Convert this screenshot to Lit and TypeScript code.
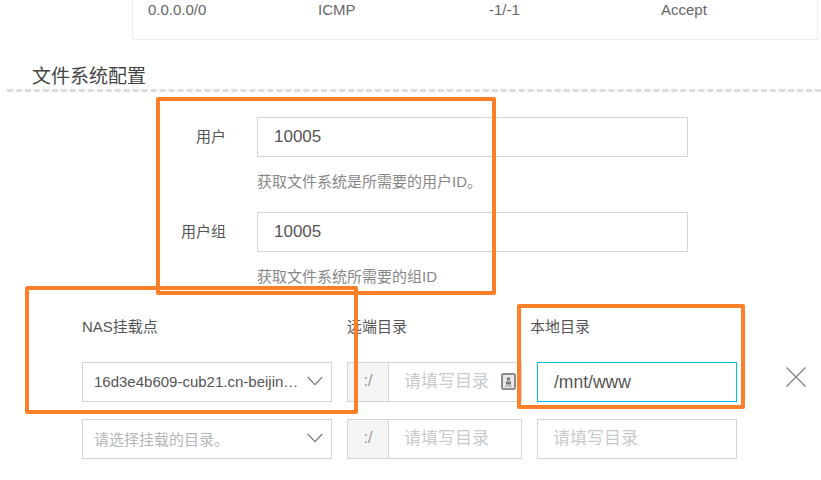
import { LitElement, html, css } from "lit";
import { customElement } from "lit/decorators.js";

const chevron = html`<svg class="chev" width="16" height="10" viewBox="0 0 16 10" fill="none" stroke="#777" stroke-width="1.1"><path d="M.7 1 8 8.6 15.3 1"/></svg>`;

@customElement("app-root")
export class AppRoot extends LitElement {
  static styles = css`
    :host {
      display: block;
      position: relative;
      width: 821px;
      height: 480px;
      overflow: hidden;
      background: #fff;
      font-family: "Liberation Sans", "Noto Sans CJK SC", sans-serif;
      font-size: 15px;
      color: #555;
    }
    * { box-sizing: border-box; }
    .table {
      display: grid;
      grid-template-columns: 170px 171px 172px 1fr;
      height: 40px;
      margin: 0 3px 0 132px;
      padding: 1px 0 0 15px;
      border: 1px solid #eee;
      border-top: none;
      line-height: 18px;
      color: #666;
    }
    .title {
      height: 52px;
      margin-left: 7px;
      padding: 26px 0 0 25px;
      border-bottom: 3px dashed #ddd;
      font-size: 19px;
      line-height: 22px;
      color: #444;
    }
    .rows { padding-top: 25px; }
    .row { display: flex; height: 95px; }
    .label {
      width: 226px;
      height: 40px;
      line-height: 40px;
      text-align: right;
      color: #555;
    }
    .field { width: 431px; margin-left: 31px; }
    .help {
      height: 55px;
      padding-top: 15px;
      line-height: 20px;
      color: #888;
    }
    input {
      display: block;
      width: 100%;
      height: 40px;
      padding: 0 16px;
      border: 1px solid #d5d5d5;
      border-radius: 0;
      outline: none;
      background: #fff;
      font: inherit;
      font-size: 17px;
      color: #555;
    }
    input:placeholder-shown { padding-left: 15px; }
    input::placeholder { color: #c8cacc; opacity: 1; }
    .cols {
      display: grid;
      grid-template-columns: 250px 175px 200px;
      column-gap: 15px;
      margin-left: 82px;
      color: #555;
    }
    .head {
      height: 55px;
      padding-top: 10px;
      line-height: 20px;
    }
    .head.local { margin-left: -7px; }
    .cols.second { margin-top: 17px; }
    .cell { position: relative; height: 40px; }
    .select {
      display: flex;
      align-items: center;
      justify-content: space-between;
      height: 40px;
      padding: 0 8px 2px 11px;
      border: 1px solid #d5d5d5;
      color: #555;
      white-space: nowrap;
    }
    .select .ph { color: #b4b6b9; }
    .chev { flex: none; margin-bottom: 1px; }
    .group { display: flex; height: 40px; }
    .prefix {
      flex: none;
      width: 41px;
      height: 40px;
      line-height: 36px;
      text-align: center;
      background: #f4f5f7;
      border: 1px solid #d5d5d5;
      border-right: none;
      color: #999;
      font-size: 16px;
    }
    .group input { flex: 1; min-width: 0; }
    input.focus { border-color: #00c1de; font-size: 17.5px; }
    .key { position: absolute; right: 6px; top: 11px; }
    .close { position: absolute; left: 786px; top: 367px; }
    .mark {
      position: absolute;
      border: 4px solid #fd7f28;
      border-radius: 2px;
      pointer-events: none;
    }
    .m1 { left: 156px; top: 97px; width: 340px; height: 198px; }
    .m2 { left: 25px; top: 286px; width: 333px; height: 128px; }
    .m3 { left: 517px; top: 304px; width: 228px; height: 105px; }
  `;

  render() {
    return html`
      <div class="table"><div>0.0.0.0/0</div><div>ICMP</div><div>-1/-1</div><div>Accept</div></div>
      <div class="title">文件系统配置</div>
      <div class="rows">
        <div class="row">
          <div class="label">用户</div>
          <div class="field">
            <input value="10005" />
            <div class="help">获取文件系统是所需要的用户ID。</div>
          </div>
        </div>
        <div class="row">
          <div class="label">用户组</div>
          <div class="field">
            <input value="10005" />
            <div class="help">获取文件系统所需要的组ID</div>
          </div>
        </div>
      </div>
      <div class="cols">
        <div class="head">NAS挂载点</div>
        <div class="head">远端目录</div>
        <div class="head local">本地目录</div>

        <div class="select"><span>16d3e4b609-cub21.cn-beijin…</span>${chevron}</div>
        <div class="cell group">
          <div class="prefix">:/</div>
          <input placeholder="请填写目录" />
          <svg class="key" width="15" height="17" viewBox="0 0 15 17">
            <rect x="1" y="1" width="13" height="15" rx="1.5" fill="#e8e8e8" stroke="#8c8c8c" stroke-width="2"/>
            <circle cx="7.500" cy="6" r="1.8" fill="#777"/>
            <rect x="5" y="8.500" width="5" height="3" fill="#777"/>
            <rect x="4" y="12.500" width="7" height="1.2" fill="#aaa"/>
          </svg>
        </div>
        <div class="cell"><input class="focus" value="/mnt/www" /></div>
      </div>
      <div class="cols second">
        <div class="select"><span class="ph">请选择挂载的目录。</span>${chevron}</div>
        <div class="cell group">
          <div class="prefix">:/</div>
          <input placeholder="请填写目录" />
        </div>
        <div class="cell"><input placeholder="请填写目录" /></div>
      </div>
      <svg class="close" width="20" height="20" viewBox="0 0 20 20" fill="none" stroke="#808080" stroke-width="1.2"><path d="M.5.5l19 19M19.500.5l-19 19"/></svg>
      <div class="mark m1"></div>
      <div class="mark m2"></div>
      <div class="mark m3"></div>
    `;
  }
}
